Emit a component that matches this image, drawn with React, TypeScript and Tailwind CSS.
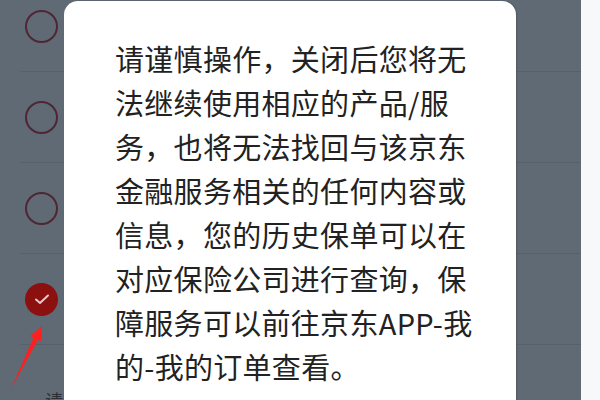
import React from 'react';

const lines = [
  '请谨慎操作，关闭后您将无',
  '法继续使用相应的产品/服',
  '务，也将无法找回与该京东',
  '金融服务相关的任何内容或',
  '信息，您的历史保单可以在',
  '对应保险公司进行查询，保',
  '障服务可以前往京东APP-我',
  '的-我的订单查看。',
];

function Radio({ checked }: { checked?: boolean }) {
  if (checked) {
    return (
      <div className="w-[33px] h-[33px] rounded-full bg-[#8c1010] flex items-center justify-center">
        <svg width="16" height="12" viewBox="0 0 16 12" fill="none">
          <path d="M2 6.5l4 3.5 8-7.5" stroke="#e8c8c8" strokeWidth="2" strokeLinecap="round" strokeLinejoin="round" />
        </svg>
      </div>
    );
  }
  return <div className="w-[33px] h-[33px] rounded-full border-2 border-[#4e2634]" />;
}

export default function App() {
  const rows = [false, false, false, true];

  return (
    <div
      className="relative w-[600px] h-[400px] overflow-hidden flex bg-white"
      style={{ fontFamily: '"Noto Sans CJK SC", "Noto Sans", sans-serif' }}
    >
      {/* dimmed list behind the dialog */}
      <div className="w-[581px] h-full bg-[#5f6a74]">
        <div className="-mt-[19px] flex flex-col">
          {rows.map((checked, i) => (
            <div key={i} className="h-[91px] ml-[20px] border-b border-[#57616b] flex items-center pl-[5px]">
              <Radio checked={checked} />
            </div>
          ))}
          <div className="ml-[45px] pt-[46px] text-[18px] text-[#2b3036] leading-none">请</div>
        </div>
      </div>
      <div className="flex-1 bg-[#f7f8f9]" />

      {/* red arrow annotation */}
      <svg className="absolute left-0 top-0" width="600" height="400" viewBox="0 0 600 400">
        <polygon points="11,389 33.6,337.5 30.4,336 42,326 41.2,341.2 38,339.7" fill="#ff1f1f" />
      </svg>

      {/* dialog */}
      <div className="absolute left-[64px] top-[1px] w-[452px] h-[440px] bg-white rounded-t-[14px] pl-[51px] pt-[35px] shadow-[1px_0_2px_rgba(0,0,0,0.15)]">
        <div className="text-[29px] leading-[44px] tracking-[0.3px] text-[#222222]">
          {lines.map((l) => (
            <div key={l} className="whitespace-nowrap">{l}</div>
          ))}
        </div>
      </div>
    </div>
  );
}
